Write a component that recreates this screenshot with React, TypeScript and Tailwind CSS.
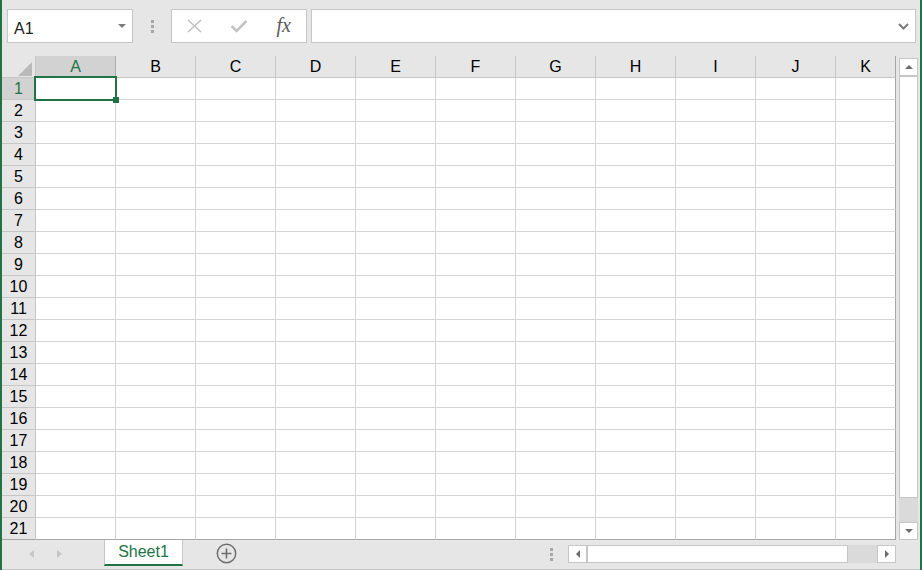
import React from "react";

const COLS = ["A", "B", "C", "D", "E", "F", "G", "H", "I", "J", "K"];
const ROWS = Array.from({ length: 21 }, (_, i) => i + 1);

function Tri({ dir, color, w = 7, h = 4 }: { dir: "up" | "down" | "left" | "right"; color: string; w?: number; h?: number }) {
  const pts =
    dir === "up"
      ? `0,${h} ${w / 2},0 ${w},${h}`
      : dir === "down"
      ? `0,0 ${w},0 ${w / 2},${h}`
      : dir === "left"
      ? `${w},0 ${w},${h} 0,${h / 2}`
      : `0,0 ${w},${h / 2} 0,${h}`;
  return (
    <svg width={w} height={h} viewBox={`0 0 ${w} ${h}`} className="block">
      <polygon points={pts} fill={color} />
    </svg>
  );
}

export default function App() {
  return (
    <div className="w-[922px] h-[570px] bg-[#e6e6e6] border-x-2 border-[#217346] flex flex-col overflow-hidden font-['Liberation_Sans',Arial,sans-serif] text-black">
      {/* Formula bar */}
      <div className="h-[56px] flex items-start pt-[9px] pl-[5px] pr-[4px] shrink-0">
        <div className="w-[126px] h-[34px] bg-white border border-[#c6c6c6] flex items-center justify-between pl-[6px] pr-[6px]">
          <span className="text-[16px] text-[#222] leading-none mt-[5px]">A1</span>
          <Tri dir="down" color="#7a7a7a" w={8} h={4} />
        </div>
        <div className="w-[38px] h-[34px] flex flex-col items-center justify-center gap-[2px]">
          <div className="w-[3px] h-[3px] bg-[#a6a6a6]" />
          <div className="w-[3px] h-[3px] bg-[#a6a6a6]" />
          <div className="w-[3px] h-[3px] bg-[#a6a6a6]" />
        </div>
        <div className="w-[136px] h-[34px] bg-white border border-[#c6c6c6] flex items-center">
          <div className="w-[45px] flex justify-center">
            <svg width="15" height="14" viewBox="0 0 15 14">
              <path d="M1 1 L14 13 M14 1 L1 13" stroke="#bdbdbd" strokeWidth="1.4" fill="none" />
            </svg>
          </div>
          <div className="w-[45px] flex justify-center">
            <svg width="18" height="13" viewBox="0 0 18 13">
              <path d="M1.5 6 L6.5 11 L16.5 1" stroke="#c4c4c4" strokeWidth="2.6" fill="none" />
            </svg>
          </div>
          <div className="w-[45px] flex justify-center">
            <span className="font-['Liberation_Serif',serif] italic text-[20px] text-[#5a5a5a] leading-none -mt-[2px]">fx</span>
          </div>
        </div>
        <div className="ml-[4px] flex-1 h-[34px] bg-white border border-[#c6c6c6] flex items-center justify-end pr-[6px]">
          <svg width="11" height="7" viewBox="0 0 11 7">
            <path d="M1 1 L5.5 5.5 L10 1" stroke="#7a7a7a" strokeWidth="2" fill="none" />
          </svg>
        </div>
      </div>

      {/* Grid + vertical scrollbar */}
      <div className="h-[484px] flex shrink-0">
        <div className="w-[894px] h-[484px] bg-white grid grid-cols-[34px_repeat(10,80px)_60px] grid-rows-[22px_repeat(21,22px)] text-[16px]">
          {/* header row */}
          <div className="bg-[#e6e6e6] border-r border-b border-[#c6c6c6] relative">
            <svg width="14" height="14" viewBox="0 0 14 14" className="absolute left-[16px] top-[6px]">
              <polygon points="14,0 14,14 0,14" fill="#b9b9b9" />
            </svg>
          </div>
          {COLS.map((c, i) => (
            <div
              key={c}
              className={
                "flex items-center justify-center pt-[1px] border-b leading-none " +
                (i === 0
                  ? "bg-[#d2d2d2] text-[#217346] border-r border-[#ababab] border-b-[#c6c6c6]"
                  : i === COLS.length - 1
                  ? "bg-[#e6e6e6] border-r border-r-[#a6a6a6] border-b-[#c6c6c6]"
                  : "bg-[#e6e6e6] border-r border-[#c6c6c6]")
              }
            >
              {c}
            </div>
          ))}
          {ROWS.map((r) => (
            <React.Fragment key={r}>
              <div
                className={
                  "flex items-center justify-center border-r border-b leading-none " +
                  (r === 21 ? "border-r-[#c6c6c6] border-b-[#a6a6a6] " : "border-[#c6c6c6] ") +
                  (r === 1 ? "bg-[#d2d2d2] text-[#217346]" : "bg-[#e6e6e6]")
                }
              >
                {r}
              </div>
              {COLS.map((c, i) => (
                <div
                  key={c}
                  className={
                    "border-b relative " +
                    (r === 21 ? "border-b-[#a6a6a6] " : "border-b-[#d4d4d4] ") +
                    (i === COLS.length - 1 ? "border-r border-r-[#a6a6a6]" : "border-r border-r-[#d4d4d4]")
                  }
                >
                  {r === 1 && i === 0 && (
                    <div className="absolute -left-[2px] -top-[2px] w-[83px] h-[25px] border-2 border-[#217346] z-10">
                      <div className="absolute -right-[4px] -bottom-[4px] w-[6px] h-[6px] bg-[#217346]" />
                    </div>
                  )}
                </div>
              ))}
            </React.Fragment>
          ))}
        </div>
        <div className="w-[24px] h-[484px] pt-[2px] pl-[3px] pr-[2px] flex flex-col">
          <div className="h-[18px] bg-white border border-[#c6c6c6] flex items-center justify-center">
            <Tri dir="up" color="#6d6d6d" w={8} h={4} />
          </div>
          <div className="flex-1 bg-[#dadada] flex flex-col">
            <div className="h-[422px] bg-white border border-[#c6c6c6]" />
          </div>
          <div className="h-[18px] bg-white border border-[#c6c6c6] flex items-center justify-center">
            <Tri dir="down" color="#6d6d6d" w={8} h={4} />
          </div>
        </div>
      </div>

      {/* Sheet tab bar */}
      <div className="flex-1 flex items-start border-b border-[#c6c6c6]">
        <div className="w-[102px] h-[28px] flex items-center pl-[27px] gap-[23px]">
          <Tri dir="left" color="#c6c6c6" w={5} h={8} />
          <Tri dir="right" color="#c6c6c6" w={5} h={8} />
        </div>
        <div className="w-[79px] h-[26px] bg-white border-x border-[#c6c6c6] border-b-2 border-b-[#217346] flex items-center justify-center">
          <span className="text-[16px] text-[#217346] leading-none">Sheet1</span>
        </div>
        <div className="ml-[33px] mt-[3px] w-[21px] h-[21px]">
          <svg width="21" height="21" viewBox="0 0 21 21">
            <circle cx="10.5" cy="10.5" r="9.2" stroke="#6e6e6e" strokeWidth="1.5" fill="none" />
            <path d="M10.5 5.5 V15.5 M5.5 10.5 H15.5" stroke="#6e6e6e" strokeWidth="1.6" />
          </svg>
        </div>
        <div className="flex-1" />
        <div className="h-[28px] flex flex-col justify-center gap-[2px] mr-[15px]">
          <div className="w-[3px] h-[3px] bg-[#a6a6a6]" />
          <div className="w-[3px] h-[3px] bg-[#a6a6a6]" />
          <div className="w-[3px] h-[3px] bg-[#a6a6a6]" />
        </div>
        <div className="w-[328px] h-[18px] mt-[5px] flex">
          <div className="w-[19px] h-[18px] bg-white border border-[#c6c6c6] flex items-center justify-center">
            <Tri dir="left" color="#6d6d6d" w={4} h={8} />
          </div>
          <div className="flex-1 bg-[#dadada] flex">
            <div className="w-[261px] h-[18px] bg-white border border-[#c6c6c6]" />
          </div>
          <div className="w-[19px] h-[18px] bg-white border border-[#c6c6c6] flex items-center justify-center">
            <Tri dir="right" color="#6d6d6d" w={4} h={8} />
          </div>
        </div>
        <div className="w-[24px]" />
      </div>
    </div>
  );
}
